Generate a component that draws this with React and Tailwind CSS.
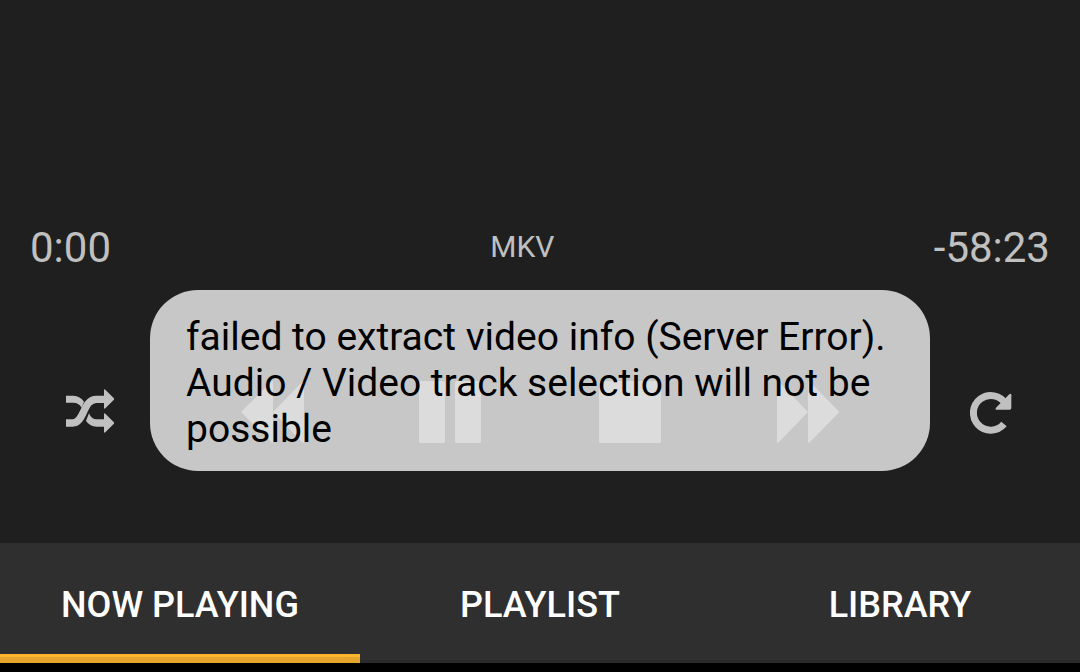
const tabs = [
  { label: "NOW PLAYING", active: true },
  { label: "PLAYLIST", active: false },
  { label: "LIBRARY", active: false },
];

function ShuffleIcon() {
  return (
    <svg viewBox="0 6 240 210" className="h-[70px] w-20" fill="#c0c0c0" aria-hidden="true">
      <path d="M48 62H70Q91 63 102 80L95 98Q86 83 70 83H48Z" />
      <path d="M117 115Q124 133 140 133H164V155H140Q118 154 108 137Z" />
      <path d="M48 144H68C104 144 98 73 139 73H164" fill="none" stroke="#c0c0c0" strokeWidth="22" />
      <path d="M162 45Q162 41 166 44L191 69Q194 72 191 75L166 100Q162 103 162 99Z" />
      <path d="M162 117Q162 113 166 116L191 141Q194 144 191 147L166 172Q162 175 162 171Z" />
    </svg>
  );
}

function RepeatIcon() {
  return (
    <svg viewBox="-15 6 240 210" className="h-[70px] w-20" fill="none" aria-hidden="true">
      <path d="M147 147A52 52 0 1 1 152 87" stroke="#c0c0c0" strokeWidth="21" />
      <path d="M163 58Q169 54 169 61V99Q169 104 164 104H126Q119 104 123 98Z" fill="#c0c0c0" />
    </svg>
  );
}

function RewindIcon() {
  return (
    <svg viewBox="-4 -4 72 72" className="size-[72px]" fill="#c0c0c0" aria-hidden="true">
      <path d="M4 31L33.500 1.500Q35 .3 35 2V32L64.500 1.500Q66 .3 66 2V62Q66 63.700 64.500 62.500L35 32V62Q35 63.700 33.500 62.500L4 33Q3 32 4 31Z" />
    </svg>
  );
}

function PauseIcon() {
  return (
    <svg viewBox="0 0 64 64" className="size-16" fill="#c0c0c0" aria-hidden="true">
      <rect x="1" y="1" width="26" height="62" rx="1.500" />
      <rect x="37" y="1" width="26" height="62" rx="1.500" />
    </svg>
  );
}

function StopIcon() {
  return (
    <svg viewBox="0 0 64 64" className="size-16" fill="#c0c0c0" aria-hidden="true">
      <rect x="1" y="1" width="62" height="62" rx="1.500" />
    </svg>
  );
}

function ForwardIcon() {
  return (
    <svg viewBox="-4 -4 72 72" className="size-[72px]" fill="#c0c0c0" aria-hidden="true">
      <path d="M60.500 31L31.500 1.500Q30 .3 30 2V32L.5 1.500Q-1 .3 -1 2V62Q-1 63.700 .5 62.500L30 32V62Q30 63.700 31.500 62.500L60.500 33Q61.500 32 60.500 31Z" />
    </svg>
  );
}

const controls = [
  { label: "Shuffle", Icon: ShuffleIcon },
  { label: "Rewind", Icon: RewindIcon },
  { label: "Pause", Icon: PauseIcon },
  { label: "Stop", Icon: StopIcon },
  { label: "Fast forward", Icon: ForwardIcon },
  { label: "Repeat", Icon: RepeatIcon },
];

export default function App() {
  return (
    <div className="flex min-h-screen flex-col bg-[#1f1f1f] font-['Roboto',sans-serif]">
      <main className="relative flex flex-1 flex-col justify-end pb-[41px]">
        <div className="flex items-start justify-between px-[30px] pb-[50px] text-[42px] leading-[48px] text-[#c0c0c0]">
          <span>0:00</span>
          <span className="text-[30px] leading-[46px]">MKV</span>
          <span>-58:23</span>
        </div>
        <div className="grid grid-cols-6">
          {controls.map(({ label, Icon }) => (
            <button key={label} type="button" aria-label={label} className="flex h-[180px] items-center justify-center">
              <Icon />
            </button>
          ))}
        </div>
        <div className="absolute inset-x-0 bottom-[72px] flex justify-center px-6">
          <div role="status" className="w-full max-w-[780px] rounded-[48px] bg-[#e0e0e0]/87 px-9 pt-6 pb-[19px] text-[39px] leading-[46px] text-black">
            failed to extract video info (Server Error). Audio / Video track selection will not be possible
          </div>
        </div>
      </main>
      <nav className="grid grid-cols-3 border-b-[9px] border-black bg-[#2f2f2f]">
        {tabs.map(({ label, active }) => (
          <button key={label} type="button" aria-current={active ? "page" : undefined} className="flex flex-col text-[36px] font-medium text-white">
            <span className="flex h-[111px] w-full items-center justify-center pt-3">{label}</span>
            <span className={active ? "h-[6px] w-full border-t-[3px] border-[#ffb52e] bg-[#e5a42c]" : "h-[6px] w-full"} />
            <span className={active ? "h-[3px] w-full bg-[#e5a42c]" : "h-[3px] w-full bg-[#2a2a2a]"} />
          </button>
        ))}
      </nav>
    </div>
  );
}
